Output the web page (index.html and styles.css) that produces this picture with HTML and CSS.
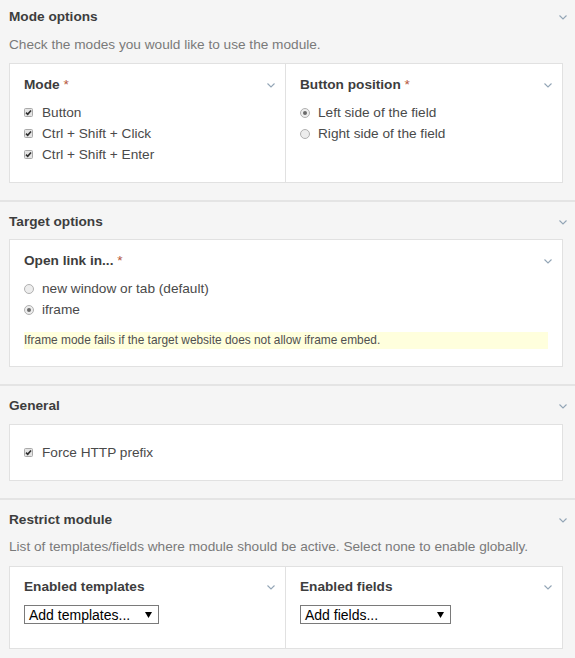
FILE: index.html
```html
<!DOCTYPE html>
<html lang="en">
<head>
<meta charset="utf-8">
<title>Module settings</title>
<link rel="stylesheet" href="styles.css">
</head>
<body>
<section class="sec sec-first">
  <div class="sec-head"><h2 class="sec-title">Mode options</h2><svg class="chev" viewBox="0 0 8 5"><polyline points="0.5,0.5 4,4 7.5,0.5"/></svg></div>
  <p class="desc">Check the modes you would like to use the module.</p>
  <div class="box cols">
    <div class="col">
      <div class="col-head"><h3 class="col-title">Mode <span class="req">*</span></h3><svg class="chev" viewBox="0 0 8 5"><polyline points="0.5,0.5 4,4 7.5,0.5"/></svg></div>
      <ul class="opts">
        <li><svg class="cb" viewBox="0 0 9 9"><rect x="0.5" y="0.5" width="8" height="8" rx="1"/><path d="M2 4.6 L3.7 6.3 L7 2.4"/></svg>Button</li>
        <li><svg class="cb" viewBox="0 0 9 9"><rect x="0.5" y="0.5" width="8" height="8" rx="1"/><path d="M2 4.6 L3.7 6.3 L7 2.4"/></svg>Ctrl + Shift + Click</li>
        <li><svg class="cb" viewBox="0 0 9 9"><rect x="0.5" y="0.5" width="8" height="8" rx="1"/><path d="M2 4.6 L3.7 6.3 L7 2.4"/></svg>Ctrl + Shift + Enter</li>
      </ul>
    </div>
    <div class="col">
      <div class="col-head"><h3 class="col-title">Button position <span class="req">*</span></h3><svg class="chev" viewBox="0 0 8 5"><polyline points="0.5,0.5 4,4 7.5,0.5"/></svg></div>
      <ul class="opts">
        <li><svg class="rd" viewBox="0 0 10 10"><circle class="ring" cx="5" cy="5" r="4.5"/><circle class="dot" cx="5" cy="5" r="2"/></svg>Left side of the field</li>
        <li><svg class="rd" viewBox="0 0 10 10"><circle class="ring" cx="5" cy="5" r="4.5"/></svg>Right side of the field</li>
      </ul>
    </div>
  </div>
</section>

<section class="sec">
  <div class="sec-head sec-head-solo"><h2 class="sec-title">Target options</h2><svg class="chev" viewBox="0 0 8 5"><polyline points="0.5,0.5 4,4 7.5,0.5"/></svg></div>
  <div class="box">
    <div class="col col-full">
      <div class="col-head"><h3 class="col-title">Open link in... <span class="req">*</span></h3><svg class="chev" viewBox="0 0 8 5"><polyline points="0.5,0.5 4,4 7.5,0.5"/></svg></div>
      <ul class="opts">
        <li><svg class="rd" viewBox="0 0 10 10"><circle class="ring" cx="5" cy="5" r="4.5"/></svg>new window or tab (default)</li>
        <li><svg class="rd" viewBox="0 0 10 10"><circle class="ring" cx="5" cy="5" r="4.5"/><circle class="dot" cx="5" cy="5" r="2"/></svg>iframe</li>
      </ul>
      <p class="note">Iframe mode fails if the target website does not allow iframe embed.</p>
    </div>
  </div>
</section>

<section class="sec">
  <div class="sec-head sec-head-solo sec-head-gen"><h2 class="sec-title">General</h2><svg class="chev" viewBox="0 0 8 5"><polyline points="0.5,0.5 4,4 7.5,0.5"/></svg></div>
  <div class="box box-plain">
    <ul class="opts opts-plain">
      <li><svg class="cb" viewBox="0 0 9 9"><rect x="0.5" y="0.5" width="8" height="8" rx="1"/><path d="M2 4.6 L3.7 6.3 L7 2.4"/></svg>Force HTTP prefix</li>
    </ul>
  </div>
</section>

<section class="sec">
  <div class="sec-head"><h2 class="sec-title">Restrict module</h2><svg class="chev" viewBox="0 0 8 5"><polyline points="0.5,0.5 4,4 7.5,0.5"/></svg></div>
  <p class="desc desc-last">List of templates/fields where module should be active. Select none to enable globally.</p>
  <div class="box cols">
    <div class="col col-sel">
      <div class="col-head"><h3 class="col-title">Enabled templates</h3><svg class="chev" viewBox="0 0 8 5"><polyline points="0.5,0.5 4,4 7.5,0.5"/></svg></div>
      <div class="select select-tpl"><span>Add templates...</span><svg class="arrow" viewBox="0 0 7 6"><polygon points="0,0 7,0 3.5,6"/></svg></div>
    </div>
    <div class="col col-sel">
      <div class="col-head"><h3 class="col-title">Enabled fields</h3><svg class="chev" viewBox="0 0 8 5"><polyline points="0.5,0.5 4,4 7.5,0.5"/></svg></div>
      <div class="select select-fld"><span>Add fields...</span><svg class="arrow" viewBox="0 0 7 6"><polygon points="0,0 7,0 3.5,6"/></svg></div>
    </div>
  </div>
</section>
</body>
</html>
```

FILE: styles.css
```css
* {
  box-sizing: border-box;
  margin: 0;
  padding: 0;
}

body {
  margin: 0;
  background: #f5f5f5;
  font-family: "Liberation Sans", Arial, sans-serif;
  font-size: 13.65px;
  color: #4a4a4a;
}

.sec {
  padding: 12px 8px 17px 9px;
  border-top: 2px solid #e4e4e4;
}

.sec-first {
  border-top: 0;
  padding-top: 9px;
}

.sec-head {
  display: flex;
  justify-content: space-between;
  align-items: center;
  height: 16px;
}

.sec-head-solo {
  margin-bottom: 9px;
}

.sec-head-gen {
  margin-bottom: 10px;
}

.sec-title,
.col-title {
  font-size: 13.65px;
  font-weight: bold;
  line-height: 16px;
  color: #3d3d3d;
}

.req {
  color: #b5573c;
  font-weight: normal;
}

.chev {
  display: block;
  width: 8px;
  height: 5px;
  flex: none;
}

.chev polyline {
  fill: none;
  stroke: #93a5b6;
  stroke-width: 1.1;
}

.desc {
  margin-top: 12px;
  margin-bottom: 10px;
  line-height: 16px;
  color: #7a7a7a;
}

.desc-last {
  margin-top: 11px;
  margin-bottom: 11px;
}

.box {
  background: #fff;
  border: 1px solid #e1e1e1;
  margin-right: 4px;
}

.cols {
  display: grid;
  grid-template-columns: 1fr 1fr;
}

.col {
  padding: 13px 10px 17px 14px;
}

.cols .col:first-child {
  border-right: 1px solid #e1e1e1;
}

.col-full {
  padding-right: 10px;
}

.col-head {
  display: flex;
  justify-content: space-between;
  align-items: center;
  height: 16px;
}

.opts {
  list-style: none;
  margin-top: 9px;
}

.opts li {
  display: flex;
  align-items: center;
  height: 21px;
  line-height: 21px;
}

.cb {
  width: 9px;
  height: 9px;
  margin-right: 9px;
  flex: none;
}

.cb rect {
  fill: #e4e4e4;
  stroke: #a9a9a9;
  stroke-width: 1;
}

.cb path {
  fill: none;
  stroke: #2e2e2e;
  stroke-width: 1.6;
}

.rd {
  width: 10px;
  height: 10px;
  margin-right: 8px;
  flex: none;
}

.rd .ring {
  fill: #ededed;
  stroke: #b0b0b0;
  stroke-width: 1;
}

.rd .dot {
  fill: #6a6a6a;
}

.note {
  margin-top: 12px;
  margin-right: 4px;
  background: #ffffdd;
  font-size: 11.9px;
  line-height: 17px;
  color: #505050;
}

.box-plain {
  padding: 17px 14px;
}

.opts-plain {
  margin-top: 0;
}

.col-sel {
  padding: 12px 10px 24px 14px;
}

.select {
  display: flex;
  justify-content: space-between;
  align-items: center;
  height: 19px;
  margin-top: 10px;
  padding: 0 6px 0 4px;
  border: 1px solid #7a7a7a;
  background: #fff;
  font-size: 14px;
  color: #000;
}

.select-tpl {
  width: 135px;
}

.select-fld {
  width: 151px;
}

.arrow {
  width: 7px;
  height: 6px;
  display: block;
}

.arrow polygon {
  fill: #000;
}
```
